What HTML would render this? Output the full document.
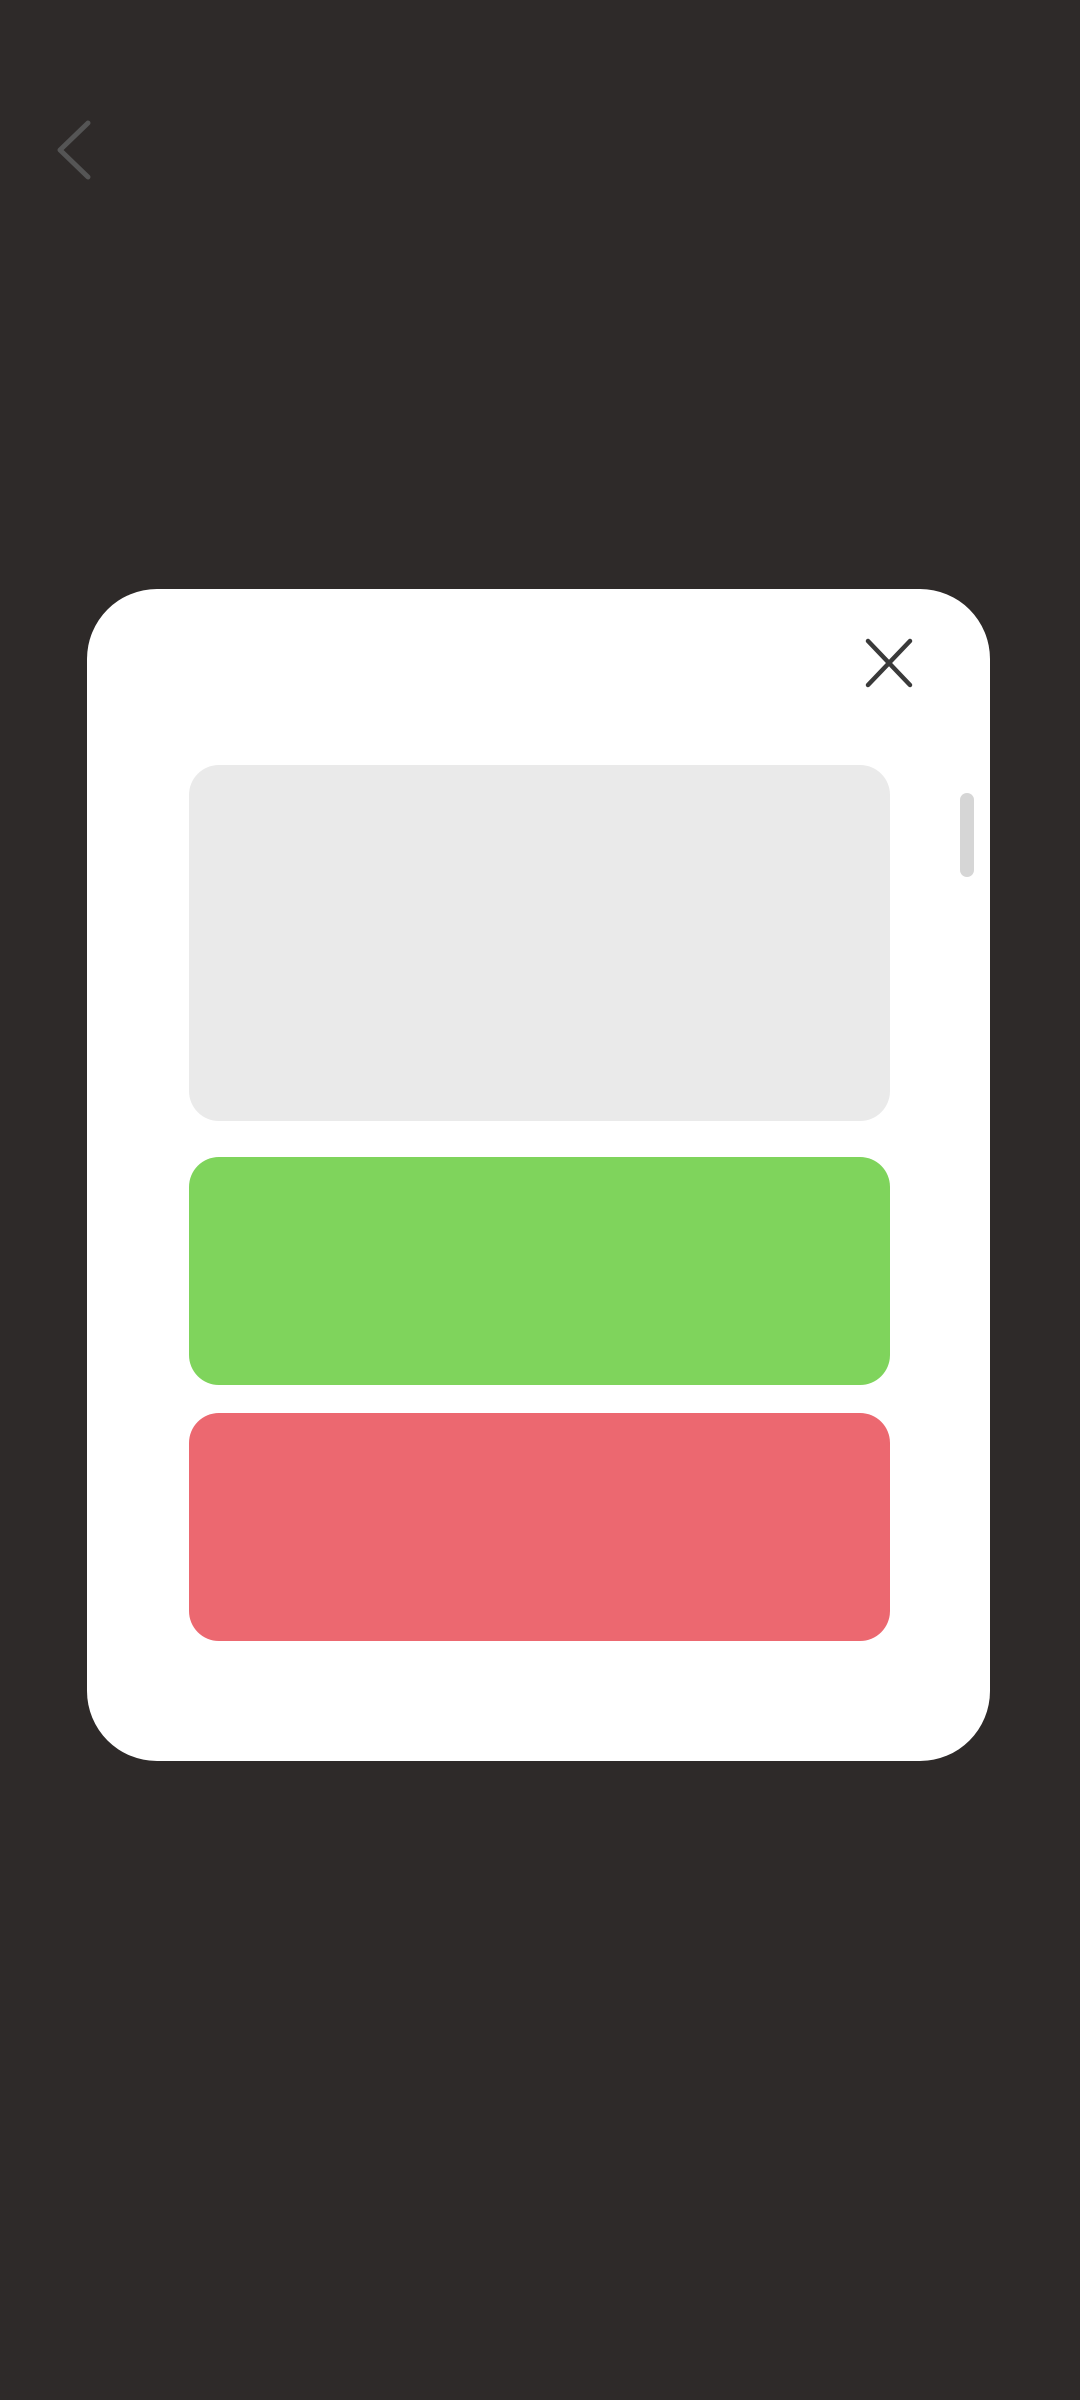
<!DOCTYPE html>
<html><head><meta charset="utf-8"><style>
html,body{margin:0;padding:0;width:1080px;height:2400px;background:#2e2a29;overflow:hidden;font-family:"Liberation Sans",sans-serif}
.abs{position:absolute}
</style></head><body>
<svg class="abs" style="left:50px;top:115px" width="50" height="70" viewBox="0 0 50 70"><path d="M38 8 L10 35 L38 62" fill="none" stroke="#555" stroke-width="5" stroke-linecap="round" stroke-linejoin="round"/></svg>
<div class="abs" style="left:87px;top:589px;width:903px;height:1172px;background:#fff;border-radius:70px"></div>
<svg class="abs" style="left:862px;top:635px" width="54" height="56" viewBox="0 0 54 56"><path d="M6 6 L48 50 M48 6 L6 50" stroke="#3a3a3a" stroke-width="4.5" stroke-linecap="round"/></svg>
<div class="abs" style="left:960px;top:793px;width:14px;height:84px;background:#d6d6d6;border-radius:7px"></div>
<div class="abs" style="left:189px;top:765px;width:701px;height:356px;background:#eaeaea;border-radius:30px"></div>
<div class="abs" style="left:189px;top:1157px;width:701px;height:228px;background:#7fd45c;border-radius:30px"></div>
<div class="abs" style="left:189px;top:1413px;width:701px;height:228px;background:#ec6870;border-radius:30px"></div>
</body></html>
